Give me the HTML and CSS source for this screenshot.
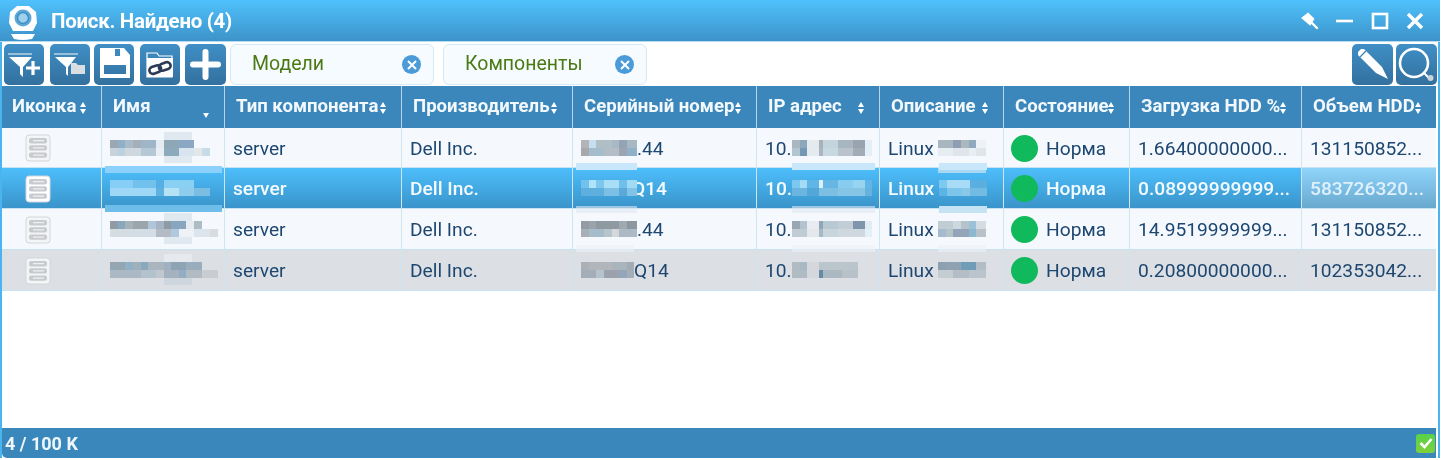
FILE: index.html
```html
<!DOCTYPE html>
<html lang="ru">
<head>
    <meta charset="UTF-8">
    <title>Поиск. Найдено (4)</title>
    <link rel="stylesheet" href="styles.css">
</head>
<body>
<svg class="defs" width="0" height="0" aria-hidden="true">
    <symbol id="server" viewBox="0 0 26 28">
        <rect x="1" y="1" width="24" height="26" rx="3" fill="currentColor" stroke="#d3d5d8"/>
        <rect x="4" y="4" width="18" height="5.4" rx="2" fill="#c7cace"/>
        <rect x="4" y="11.2" width="18" height="5.4" rx="2" fill="#c7cace"/>
        <rect x="4" y="18.4" width="18" height="5.4" rx="2" fill="#c7cace"/>
        <path d="M8 6.7h11M8 13.9h11M8 21.1h11" stroke="#eff0f1" stroke-width="1.2"/>
    </symbol>
</svg>

<div class="window">
    <!-- Title bar -->
    <header class="titlebar">
        <svg class="logo" width="30" height="36" viewBox="0 0 30 36">
            <path d="M9 1h12l7 6 1 11-4 8H5L1 18 2 7z" fill="#fff"/>
            <circle cx="15" cy="13" r="8.5" fill="#5aa9d8"/>
            <circle cx="15" cy="13" r="5.5" fill="#9fd0ee" stroke="#3f8fc4" stroke-width="1.5"/>
            <path d="M3 29h24l-3 5q-9 2-18 0z" fill="#fff"/>
        </svg>
        <h1 class="title">Поиск. Найдено (4)</h1>
        <div class="window-controls">
            <svg width="20" height="20" viewBox="0 0 20 20"><path d="M3 7l5-4 5 5-3 5zM10 10l7 7" fill="#fff" stroke="#fff" stroke-width="2.4" stroke-linecap="round"/></svg>
            <svg width="20" height="20" viewBox="0 0 20 20"><path d="M1 10h17" stroke="#fff" stroke-width="2.6"/></svg>
            <svg width="20" height="20" viewBox="0 0 20 20"><rect x="3" y="3" width="14" height="14" fill="none" stroke="#fff" stroke-width="2.6"/></svg>
            <svg width="20" height="20" viewBox="0 0 20 20"><path d="M3 3l14 14M17 3L3 17" stroke="#fff" stroke-width="3.4"/></svg>
        </div>
    </header>

    <!-- Toolbar -->
    <div class="toolbar">
        <button class="tool" type="button">
            <svg width="40" height="41" viewBox="0 0 40 41">
                <path d="M4 10h24" stroke="#b9d3e6" stroke-width="1.6"/>
                <path d="M5 13h23l-9 10v10l-3-3v-7z" fill="#fff"/>
                <path d="M29 17v14M22 24h14" stroke="#fff" stroke-width="3.2"/>
            </svg>
        </button>
        <button class="tool tool-wide-gap" type="button">
            <svg width="40" height="41" viewBox="0 0 40 41">
                <path d="M4 10h24" stroke="#b9d3e6" stroke-width="1.6"/>
                <path d="M5 13h21l-8 10v9l-2-2v-7z" fill="#fff"/>
                <path d="M21 19h5l2 2h7v9H21z" fill="#d9dee2"/>
            </svg>
        </button>
        <button class="tool" type="button">
            <svg width="40" height="41" viewBox="0 0 40 41">
                <path fill-rule="evenodd" fill="#fff" d="M6 4h24l6 7v23H6zM21 5v7h5V5zM10 21v9h22v-9z"/>
            </svg>
        </button>
        <button class="tool tool-wide-gap" type="button">
            <svg width="40" height="41" viewBox="0 0 40 41">
                <path d="M7 12V9h10l2 3h13v21H7z" fill="none" stroke="#fff" stroke-width="1.2"/>
                <path d="M7 14h26v19H7z" fill="#fff"/>
                <g fill="none" stroke="#2b3a55" stroke-width="2.6" transform="rotate(-18 20 24)">
                    <rect x="9" y="20.5" width="12" height="7" rx="3.5"/>
                    <rect x="19" y="20.5" width="12" height="7" rx="3.5"/>
                </g>
            </svg>
        </button>
        <button class="tool tool-plus" type="button">
            <svg width="41" height="41" viewBox="0 0 41 41"><path d="M20.5 8v25M8 20.5h25" stroke="#fff" stroke-width="6" stroke-linecap="round"/></svg>
        </button>

        <div class="tab tab-first">
            <span class="tab-label">Модели</span>
            <span class="tab-close">
                <svg width="10" height="10" viewBox="0 0 10 10"><path d="M1 1l8 8M9 1L1 9" stroke="#fff" stroke-width="2"/></svg>
            </span>
        </div>
        <div class="tab">
            <span class="tab-label">Компоненты</span>
            <span class="tab-close">
                <svg width="10" height="10" viewBox="0 0 10 10"><path d="M1 1l8 8M9 1L1 9" stroke="#fff" stroke-width="2"/></svg>
            </span>
        </div>

        <div class="toolbar-right">
            <button class="tool" type="button">
                <svg width="41" height="41" viewBox="0 0 41 41">
                    <path d="M9 5l3 0 18 18 6 12-12-6L6 11l0-3z" fill="#fff"/>
                    <path d="M8 13l6-6" stroke="#3b84b8" stroke-width="1.2"/>
                </svg>
            </button>
            <button class="tool" type="button">
                <svg width="41" height="41" viewBox="0 0 41 41">
                    <circle cx="18" cy="19" r="14" fill="none" stroke="#fff" stroke-width="2.6"/>
                    <path d="M28 29l5 5" stroke="#fff" stroke-width="2"/>
                    <circle cx="34.5" cy="34" r="3" fill="#c9d4db"/>
                </svg>
            </button>
        </div>
    </div>

    <!-- Results grid -->
    <div class="grid-area">
        <table class="grid">
            <colgroup>
                <col class="col-1"><col class="col-2"><col class="col-3"><col class="col-4"><col class="col-5">
                <col class="col-6"><col class="col-7"><col class="col-8"><col class="col-9"><col class="col-10">
            </colgroup>
            <thead>
                <tr>
                    <th>Иконка<span class="sort"></span></th>
                    <th>Имя<span class="sort sort-desc"></span></th>
                    <th>Тип компонента<span class="sort"></span></th>
                    <th>Производитель<span class="sort"></span></th>
                    <th>Серийный номер<span class="sort"></span></th>
                    <th>IP адрес<span class="sort"></span></th>
                    <th>Описание<span class="sort"></span></th>
                    <th>Состояние<span class="sort"></span></th>
                    <th>Загрузка HDD %<span class="sort"></span></th>
                    <th>Объем HDD<span class="sort"></span></th>
                </tr>
            </thead>
            <tbody>
                <tr>
                    <td class="cell-icon"><svg class="server-icon" width="26" height="28"><use href="#server"/></svg></td>
                    <td><span class="mosaic name-mosaic name-1"></span></td>
                    <td>server</td>
                    <td>Dell Inc.</td>
                    <td><span class="mosaic serial-mosaic serial-1"></span>.44</td>
                    <td>10.<span class="mosaic ip-mosaic ip-1"></span></td>
                    <td>Linux <span class="mosaic desc-mosaic desc-1"></span></td>
                    <td><span class="status"><span class="dot"></span>Норма</span></td>
                    <td>1.66400000000...</td>
                    <td>131150852...</td>
                </tr>
                <tr class="selected">
                    <td class="cell-icon"><svg class="server-icon" width="26" height="28"><use href="#server"/></svg></td>
                    <td><span class="mosaic name-mosaic name-2"></span></td>
                    <td>server</td>
                    <td>Dell Inc.</td>
                    <td><span class="mosaic serial-mosaic serial-2"></span>Q14</td>
                    <td>10.<span class="mosaic ip-mosaic ip-2"></span></td>
                    <td>Linux <span class="mosaic desc-mosaic desc-2"></span></td>
                    <td><span class="status"><span class="dot"></span>Норма</span></td>
                    <td>0.08999999999...</td>
                    <td class="cell-hover">583726320...</td>
                </tr>
                <tr>
                    <td class="cell-icon"><svg class="server-icon" width="26" height="28"><use href="#server"/></svg></td>
                    <td><span class="mosaic name-mosaic name-3"></span></td>
                    <td>server</td>
                    <td>Dell Inc.</td>
                    <td><span class="mosaic serial-mosaic serial-3"></span>.44</td>
                    <td>10.<span class="mosaic ip-mosaic ip-3"></span></td>
                    <td>Linux <span class="mosaic desc-mosaic desc-3"></span></td>
                    <td><span class="status"><span class="dot"></span>Норма</span></td>
                    <td>14.9519999999...</td>
                    <td>131150852...</td>
                </tr>
                <tr class="muted">
                    <td class="cell-icon"><svg class="server-icon" width="26" height="28"><use href="#server"/></svg></td>
                    <td><span class="mosaic name-mosaic name-4"></span></td>
                    <td>server</td>
                    <td>Dell Inc.</td>
                    <td><span class="mosaic serial-mosaic serial-4"></span>Q14</td>
                    <td>10.<span class="mosaic ip-mosaic ip-4"></span></td>
                    <td>Linux <span class="mosaic desc-mosaic desc-4"></span></td>
                    <td><span class="status"><span class="dot"></span>Норма</span></td>
                    <td>0.20800000000...</td>
                    <td>102353042...</td>
                </tr>
            </tbody>
        </table>
    </div>

    <!-- Status bar -->
    <footer class="statusbar">
        <span>4 / 100 K</span>
        <span class="ok">
            <svg width="14" height="12" viewBox="0 0 14 12"><path d="M1.5 6l4 4 7-8" fill="none" stroke="#fff" stroke-width="2.6"/></svg>
        </span>
    </footer>
</div>
</body>
</html>
```

FILE: styles.css
```css
/* Reset and base styles */
* {
    box-sizing: border-box;
    margin: 0;
    padding: 0;
}

body {
    font-family: Roboto, Arial, sans-serif;
    background-color: #fff;
    color: #1d4770;
    overflow: hidden;
}

.defs {
    position: absolute;
}

.window {
    width: 1440px;
    height: 458px;
    display: flex;
    flex-direction: column;
    border-left: 2px solid #4ab4ef;
    border-right: 2px solid #4ab4ef;
    background-color: #fff;
    filter: blur(0.3px);
}

/* Title bar */
.titlebar {
    height: 42px;
    margin: 0 -2px;
    display: flex;
    align-items: center;
    flex-shrink: 0;
    background: linear-gradient(#4fc1fc, #3d93c9);
    border-bottom: 1px solid #b5dcf3;
    color: #fff;
}

.logo {
    margin: 4px 0 0 8px;
}

.title {
    margin-left: 13px;
    padding-top: 1px;
    font-size: 20.5px;
    font-weight: 700;
    letter-spacing: -0.3px;
}

.window-controls {
    margin-left: auto;
    margin-right: 15px;
    display: flex;
    gap: 15px;
}

/* Toolbar */
.toolbar {
    height: 44px;
    flex-shrink: 0;
    display: flex;
    align-items: flex-start;
    gap: 4px;
    padding: 2px 1px 0 2px;
}

.tool {
    width: 40px;
    height: 41px;
    flex-shrink: 0;
    border: none;
    border-radius: 5px;
    background: linear-gradient(#3f8fc6, #33709e);
    overflow: hidden;
}

.tool svg {
    display: block;
}

.tool-wide-gap {
    margin-left: 2px;
}

.tool-plus {
    width: 41px;
    margin-left: 1px;
}

.tab {
    width: 204px;
    height: 41px;
    margin-left: 5px;
    padding: 0 12px 0 21px;
    display: flex;
    align-items: center;
    justify-content: space-between;
    background-color: #f6fbff;
    border: 1px solid #d6e9f6;
    border-radius: 6px;
}

.tab-first {
    margin-left: 0;
}

.tab-label {
    margin-bottom: 3px;
    font-size: 19.5px;
    color: #4b7a12;
}

.tab-close {
    width: 19px;
    height: 19px;
    display: flex;
    align-items: center;
    justify-content: center;
    border-radius: 50%;
    background-color: #4c9bd9;
}

.toolbar-right {
    margin-left: auto;
    display: flex;
    gap: 3px;
}

.toolbar-right .tool {
    width: 41px;
}

/* Results grid */
.grid-area {
    flex: 1;
}

.grid {
    width: 1434px;
    table-layout: fixed;
    border-collapse: separate;
    border-spacing: 0;
    font-size: 19.2px;
}

.col-1 { width: 100px; }
.col-2 { width: 123px; }
.col-3 { width: 177px; }
.col-4 { width: 171px; }
.col-5 { width: 184px; }
.col-6 { width: 123px; }
.col-7 { width: 124px; }
.col-8 { width: 126px; }
.col-9 { width: 172px; }
.col-10 { width: 134px; }

.grid th {
    position: relative;
    height: 42px;
    padding: 0 0 2px 11px;
    text-align: left;
    white-space: nowrap;
    overflow: hidden;
    color: #f2f8fc;
    font-size: 18.6px;
    font-weight: 700;
    background-color: #3b87bc;
    border-right: 1px solid #b7d5e8;
}

.grid th:first-child {
    padding-left: 10px;
}

.grid th:last-child {
    border-right: none;
}

/* Sort arrows sit on top of the long captions */
.sort {
    position: absolute;
    right: 14px;
    top: 16px;
    width: 7px;
    height: 12px;
}

.sort::before,
.sort::after {
    content: "";
    position: absolute;
    left: 0;
    border-left: 3.5px solid transparent;
    border-right: 3.5px solid transparent;
}

.sort::before {
    top: 0;
    border-bottom: 5px solid #fff;
}

.sort::after {
    bottom: 0;
    border-top: 5px solid #fff;
}

.sort-desc::before {
    display: none;
}

.sort-desc::after {
    bottom: -4px;
}

.grid td {
    height: 41px;
    padding: 1px 0 0 8px;
    white-space: nowrap;
    overflow: visible;
    background-color: #f5f9fe;
    border-right: 1px solid #d0e5f2;
    border-bottom: 1px solid #c5e3f5;
}

.grid td:last-child {
    border-right: none;
}

.grid tbody tr:first-child td {
    height: 40px;
}

.cell-icon {
    text-align: center;
}

.server-icon {
    display: block;
    margin: 0 auto 0 15px;
    color: #f4f5f6;
}

/* Row states */
.grid .selected td {
    color: #f4fbff;
    font-weight: 500;
    background: linear-gradient(#4dbefb, #3a94ca);
}

.grid .selected td.cell-hover {
    color: #dff1fc;
    background: linear-gradient(#90d4fa, #68a8cf);
}

.selected .server-icon {
    color: #fff;
}

.grid .muted td {
    background-color: #dcdfe4;
}

/* Status cell */
.status {
    display: flex;
    align-items: center;
    gap: 8px;
    margin-left: -1px;
}

.dot {
    width: 27px;
    height: 27px;
    flex-shrink: 0;
    border-radius: 50%;
    background-color: #10b95c;
}

/* Pixelated values */
.mosaic {
    position: relative;
    display: inline-block;
    vertical-align: middle;
    height: 16px;
    margin-top: -3px;
    background-size: 100% 50%;
    background-repeat: no-repeat;
    background-position: top, bottom;
    filter: blur(0.6px);
}

.mosaic::before,
.mosaic::after {
    content: "";
    position: absolute;
    left: -5px;
    right: 0;
    height: 7px;
}

.mosaic::before {
    top: -17px;
    background-color: var(--bar-top, transparent);
}

.mosaic::after {
    bottom: -17px;
    background-color: var(--bar-bottom, transparent);
}

.selected .mosaic {
    --bar-top: #c8e7fa;
    --bar-bottom: rgba(225, 232, 240, 0.6);
}

.muted .mosaic {
    --bar-top: rgba(236, 240, 245, 0.6);
}

.name-mosaic {
    width: 108px;
}

.name-mosaic::before,
.name-mosaic::after {
    left: 54px;
    right: 26px;
}

.name-mosaic::before {
    top: -8px;
    height: 8px;
}

.name-mosaic::after {
    bottom: -7px;
}

.name-1,
.name-3,
.name-4 {
    --bar-top: rgba(170, 190, 205, 0.28);
    --bar-bottom: rgba(170, 190, 205, 0.28);
}

.grid .selected .name-2 {
    --bar-top: #8bd1fb;
    --bar-bottom: #6fbde9;
}

.selected .name-mosaic::before,
.selected .name-mosaic::after {
    left: -5px;
    right: -4px;
}

.selected .name-mosaic::before {
    top: -14px;
    height: 7px;
}

.selected .name-mosaic::after {
    bottom: -16px;
}

.serial-mosaic {
    width: 56px;
}

/* The mosaic hides part of the Q in the selected row */
.serial-mosaic.serial-2 {
    margin-right: -5px;
}

.serial-mosaic.serial-4 {
    width: 53px;
}

.ip-mosaic {
    width: 80px;
}

.ip-mosaic::before,
.ip-mosaic::after {
    left: 0;
    right: -3px;
}

.desc-mosaic {
    width: 48px;
}

.desc-mosaic::before,
.desc-mosaic::after {
    left: 0;
}

.name-1 {
    background-image:
        linear-gradient(90deg, #9aa8b4 0 8px, #8fb0c6 0 15px, #a9bac8 0 23px, #a4afba 0 31px, #9fb6c8 0 46px, #e4ebf1 0 54px, #8ea7b7 0 69px, #8aa8c4 0 84px, transparent 0),
        linear-gradient(90deg, #c8d2da 0 8px, #bcd2e1 0 15px, #cfd8df 0 31px, #b6c8d6 0 46px, #e8eef3 0 54px, #8daabc 0 69px, #d8e4ef 0 84px, #e2e7ea 0 92px, #c8dbe8 0 100px, transparent 0);
}

.name-2 {
    background-image:
        linear-gradient(90deg, #86cef5 0 23px, #72c0ec 0 46px, #55aee4 0 54px, #8ad0f2 0 84px, transparent 0),
        linear-gradient(90deg, #9fd8f7 0 46px, #5db2e2 0 54px, #b6e2f6 0 69px, #8fcdec 0 84px, #7cbde3 0 100px, transparent 0);
}

.name-3 {
    background-image:
        linear-gradient(90deg, #8f9ca6 0 8px, #8aa7bc 0 15px, #a6b2ba 0 23px, #9aa6ac 0 38px, #b0c5d8 0 46px, #a4b4c4 0 54px, #8e9aa5 0 61px, #88a6bd 0 76px, #e6ebef 0 84px, #aebcc6 0 92px, transparent 0),
        linear-gradient(90deg, #d5dde3 0 23px, #d2dde6 0 46px, #b4bbc4 0 61px, #b0c9dc 0 69px, #eef2f6 0 84px, #dce5ec 0 100px, #d9dde0 0 108px, transparent 0);
}

.name-4 {
    background-image:
        linear-gradient(90deg, #95a6b3 0 15px, #8fb0c6 0 23px, #9fb0bc 0 31px, #8aa9bc 0 38px, #a9b6c0 0 54px, #a0b2c2 0 61px, #8ea3b4 0 76px, #99adbc 0 92px, transparent 0),
        linear-gradient(90deg, #abb9c4 0 31px, #b4c2cd 0 46px, #c0c7d0 0 54px, #a4b2bf 0 69px, #94adc2 0 76px, #b0bbc4 0 92px, #c9cdd2 0 108px, transparent 0);
}

.serial-1 {
    background-image:
        linear-gradient(90deg, #b4b4b8 0 8px, #c6dff0 0 15px, #b0bec5 0 31px, #a8b8c4 0 38px, #93a4b2 0 46px, #a7b7c3 0 56px),
        linear-gradient(90deg, #a6a8ae 0 8px, #a4bccb 0 23px, #b2bdc6 0 38px, #9ba4b0 0 46px, #8fb0c8 0 56px);
}

.serial-2 {
    background-image:
        linear-gradient(90deg, #72c2ee 0 8px, #b0e2fa 0 15px, #7dc6ed 0 23px, #a8def7 0 38px, #6fbfea 0 46px, #a0daf5 0 56px),
        linear-gradient(90deg, #5eaede 0 23px, #7cc0e6 0 38px, #5aa9d9 0 46px, #82c4e8 0 56px);
}

.serial-3 {
    background-image:
        linear-gradient(90deg, #959ba2 0 8px, #9aa3ab 0 15px, #8f99a2 0 38px, #9fa9b0 0 46px, #8d97a0 0 56px),
        linear-gradient(90deg, #a9afb6 0 8px, #a7bcca 0 23px, #b8c4cc 0 31px, #d4d8dc 0 38px, #acbac6 0 56px);
}

.serial-4 {
    background-image:
        linear-gradient(90deg, #aab0b6 0 8px, #b2b6bb 0 31px, #aab4bc 0 46px, #a3acb4 0 53px),
        linear-gradient(90deg, #a3aeb8 0 15px, #b5c3cc 0 23px, #9ba2ac 0 38px, #92a7ba 0 46px, #a5aeb6 0 53px);
}

.ip-1 {
    background-image:
        linear-gradient(90deg, #a9b8c0 0 8px, #8ba7bc 0 15px, #e4eaee 0 27px, #a4b2bc 0 31px, #c4d4dc 0 46px, #a8b6c2 0 61px, #99a4b0 0 73px, #e4f0f8 0 80px),
        linear-gradient(90deg, #b3c5d0 0 8px, #7697b3 0 15px, #e4eaee 0 27px, #a9b5c0 0 31px, #c8d8e0 0 46px, #bac2cb 0 61px, #a2acb7 0 73px, #e4f0f8 0 80px);
}

.ip-2 {
    background-image:
        linear-gradient(90deg, #7cc8ef 0 8px, #a4dcf6 0 15px, #5fb5e6 0 27px, #d8f1fb 0 31px, #66b6e4 0 46px, #88cdef 0 61px, #96d4f1 0 73px, #62b6e6 0 80px),
        linear-gradient(90deg, #6bb6e0 0 15px, #52a6d8 0 27px, #7cbfe3 0 46px, #86c5e6 0 73px, #66b2dc 0 80px);
}

.ip-3 {
    background-image:
        linear-gradient(90deg, #99a7b3 0 8px, #b3c4d0 0 15px, #e8ecf0 0 27px, #92a5b4 0 31px, #b8c9d4 0 46px, #c2cdd5 0 61px, #7f95ab 0 73px, #dfecf4 0 80px),
        linear-gradient(90deg, #c0ccd4 0 15px, #e4e8ec 0 27px, #a7b9c6 0 31px, #c8d5dd 0 46px, #cfd8df 0 73px, #e4f0f8 0 80px);
}

.ip-4 {
    background-image:
        linear-gradient(90deg, #b0bbc3 0 8px, #a8b8c4 0 15px, #d4d7dc 0 27px, #bac5cc 0 66px, transparent 0),
        linear-gradient(90deg, #b0bbc3 0 15px, #d4d7dc 0 27px, #668aa8 0 31px, #aab8c2 0 50px, #b8c1c8 0 66px, transparent 0);
}

.desc-1 {
    --bar-bottom: rgba(230, 235, 240, 0.6);
    background-image:
        linear-gradient(90deg, #a9b6bf 0 15px, #8f9eb4 0 23px, #abb9bf 0 31px, #8faabe 0 38px, #eef2f6 0 48px),
        linear-gradient(90deg, #e6edf2 0 15px, #dfe5ea 0 31px, #e9eef2 0 38px, #dfe5e8 0 48px);
}

.grid .selected .desc-2 {
    --bar-bottom: #c5e3f3;
    background-image:
        linear-gradient(90deg, #7ec9f2 0 8px, #a8dcf6 0 31px, #5aaee0 0 48px),
        linear-gradient(90deg, #5cb4e4 0 8px, #7cc6ec 0 23px, #88c9ea 0 31px, #72bbe3 0 48px);
}

.desc-3 {
    background-image:
        linear-gradient(90deg, #c2ccd4 0 15px, #ccd8e0 0 23px, #b8c2ca 0 31px, #9cc2da 0 38px, #d6dde2 0 48px),
        linear-gradient(90deg, #a5b9cf 0 8px, #b5c4c8 0 15px, #95a4b8 0 31px, #8db8d0 0 38px, #b8c2c8 0 48px);
}

.desc-4 {
    background-image:
        linear-gradient(90deg, #8ba0b0 0 8px, #90a2b2 0 23px, #6f9db8 0 38px, #b2bcc4 0 48px),
        linear-gradient(90deg, #c4cdd2 0 15px, #b4bcc6 0 31px, #bac4cc 0 48px);
}

/* Status bar */
.statusbar {
    height: 30px;
    flex-shrink: 0;
    margin-right: 2px;
    padding: 0 1px 0 3px;
    display: flex;
    align-items: center;
    justify-content: space-between;
    color: #eef6fb;
    font-size: 18px;
    font-weight: 700;
    background-color: #3a87bb;
    border-bottom-left-radius: 5px;
}

.ok {
    width: 19px;
    height: 19px;
    display: flex;
    align-items: center;
    justify-content: center;
    border-radius: 3px;
    background: linear-gradient(#57d24b, #7fd03a);
}
```
